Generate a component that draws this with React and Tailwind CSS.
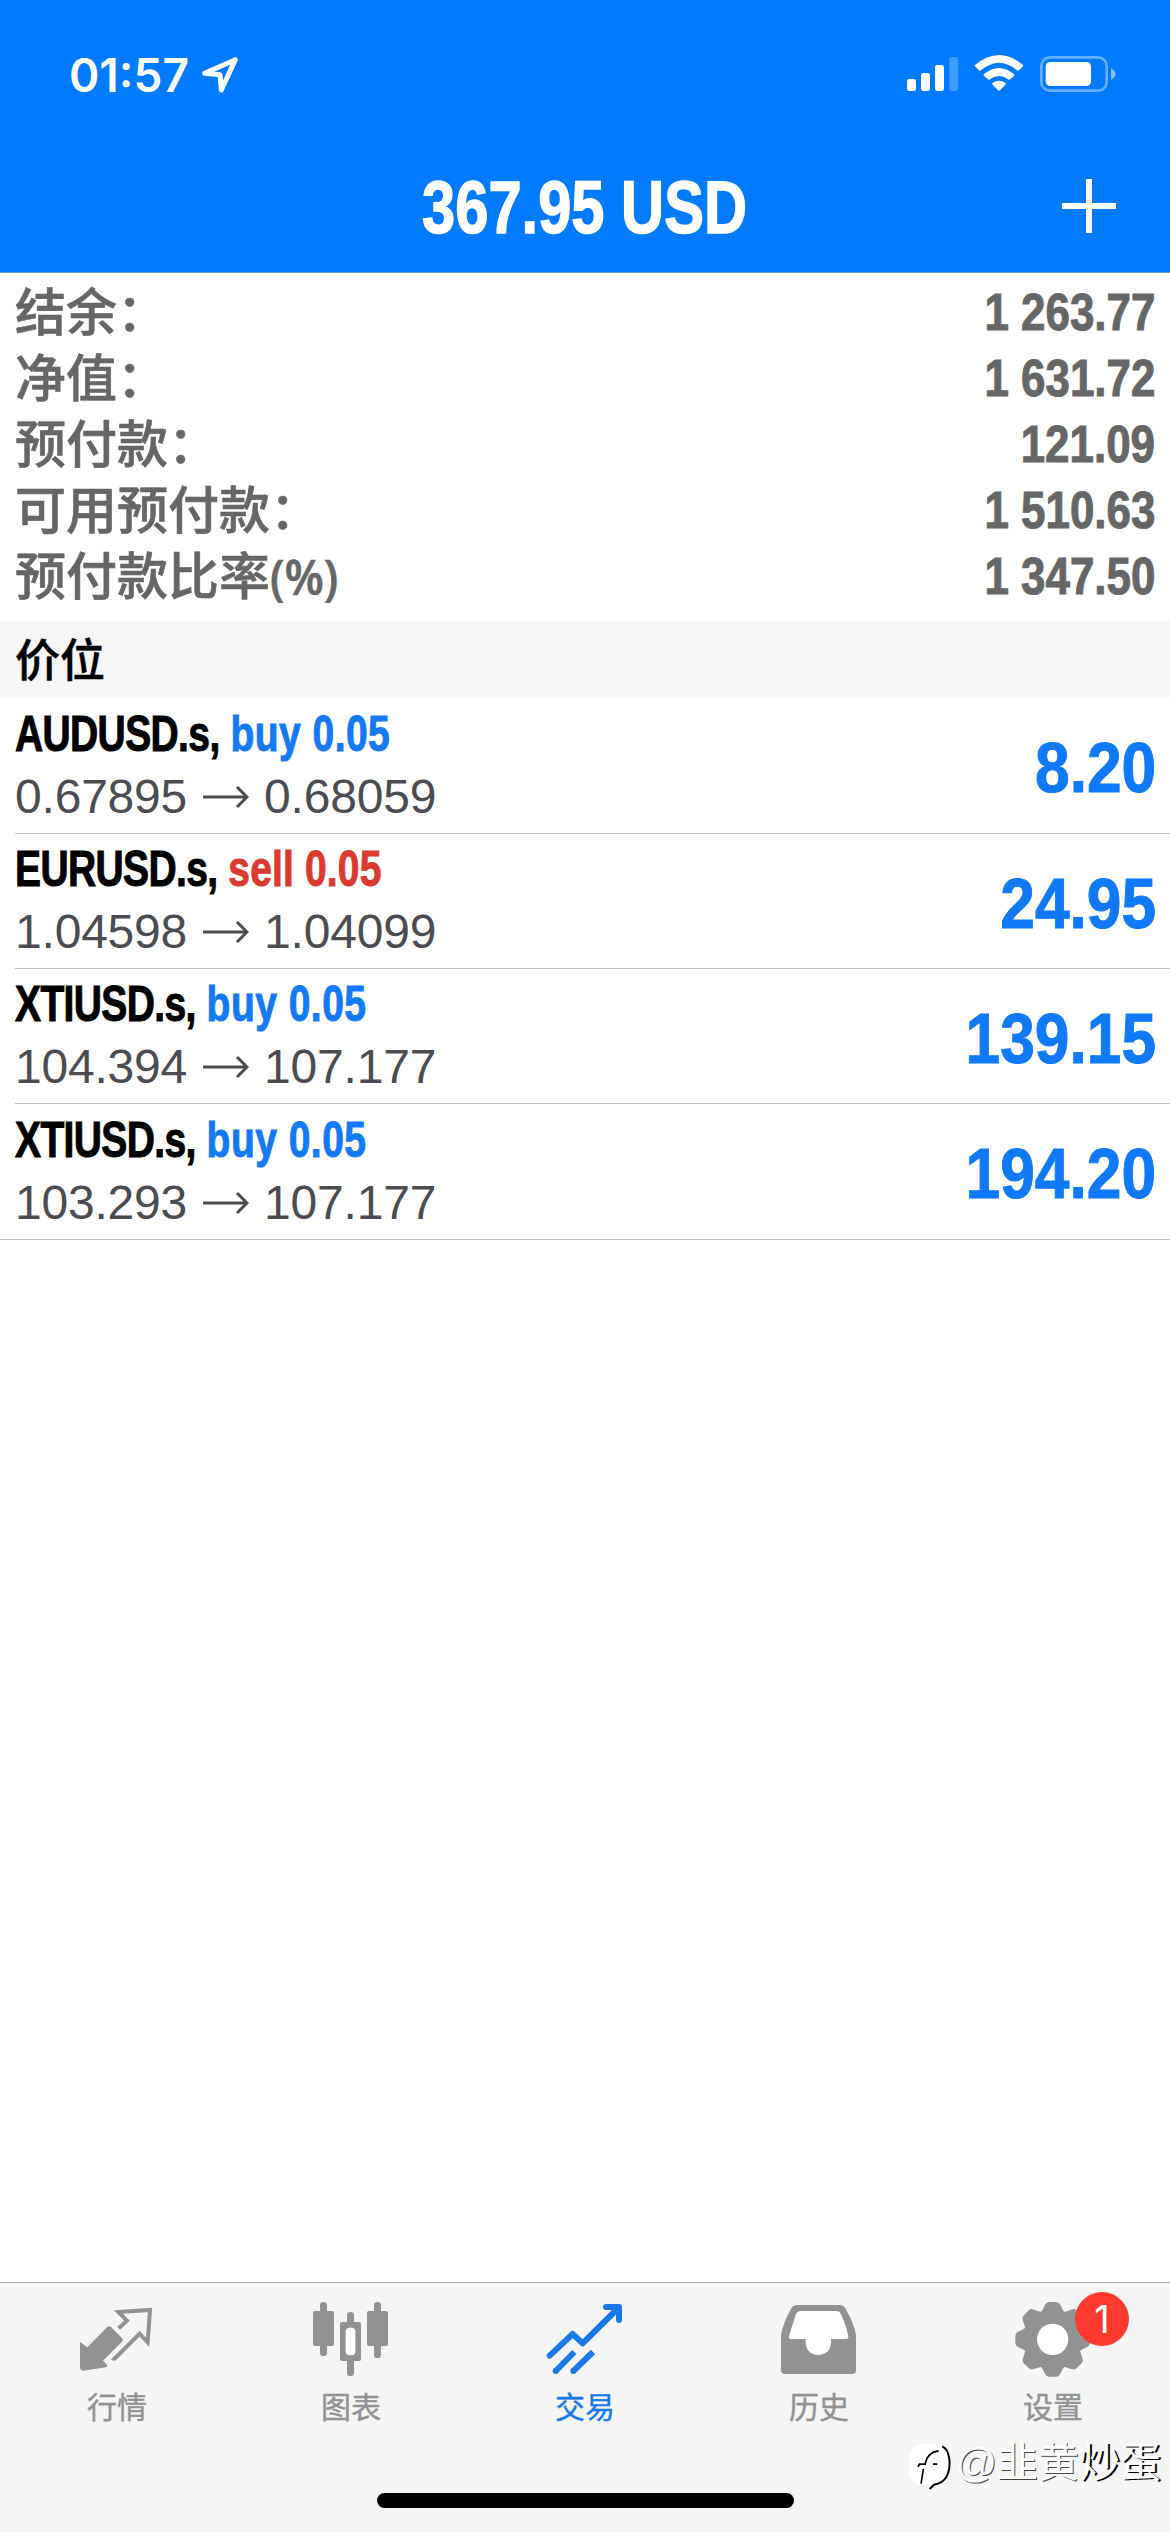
const summary = [
  { label: "结余：", value: "1 263.77" },
  { label: "净值：", value: "1 631.72" },
  { label: "预付款：", value: "121.09" },
  { label: "可用预付款：", value: "1 510.63" },
  { label: "预付款比率", unit: "(%)", value: "1 347.50" },
];

const positions = [
  { id: 1, symbol: "AUDUSD.s", side: "buy", volume: "0.05", open: "0.67895", current: "0.68059", profit: "8.20" },
  { id: 2, symbol: "EURUSD.s", side: "sell", volume: "0.05", open: "1.04598", current: "1.04099", profit: "24.95" },
  { id: 3, symbol: "XTIUSD.s", side: "buy", volume: "0.05", open: "104.394", current: "107.177", profit: "139.15" },
  { id: 4, symbol: "XTIUSD.s", side: "buy", volume: "0.05", open: "103.293", current: "107.177", profit: "194.20" },
];

function QuotesIcon() {
  return (
    <svg viewBox="216 81 270 270" className="w-[90px] h-[90px]" fill="none">
      <path
        d="M240 215 L262 232 L322 171 Q328 166 333 171 L366 204 Q371 210 366 215 L309 272 L322 285 Q323 291 318 292 L250 302 Q240 302 240 292 Z"
        fill="currentColor"
      />
      <path d="M356 175 L381 152 L355 126 L450 120 L443 217 L419 191 L346 264 Q342 268 337 264" stroke="currentColor" strokeWidth="12" />
    </svg>
  );
}

function ChartIcon() {
  return (
    <svg viewBox="918 81 270 270" className="w-[90px] h-[90px]" fill="currentColor">
      <rect x="939" y="123" width="63" height="105" rx="6" />
      <rect x="960" y="96" width="21" height="162" rx="10" />
      <rect x="1101" y="123" width="63" height="105" rx="6" />
      <rect x="1122" y="96" width="21" height="168" rx="10" />
      <rect x="1041" y="126" width="21" height="40" rx="10" />
      <rect x="1041" y="262" width="21" height="56" rx="10" />
      <rect x="1020" y="156" width="63" height="117" rx="6" />
      <rect x="1037" y="173" width="29" height="83" rx="12" fill="#fff" />
    </svg>
  );
}

function TradeIcon() {
  return (
    <svg viewBox="120 81 270 270" className="w-[90px] h-[90px]" fill="none" stroke="currentColor" strokeWidth="18">
      <path d="M149 257 L218 192 L248 220 L355 114" strokeLinecap="round" strokeLinejoin="round" />
      <path d="M318 111 H357 V150" strokeLinecap="round" strokeLinejoin="round" />
      <path d="M330 111 L357 138 V111 Z" fill="currentColor" stroke="none" />
      <circle cx="167" cy="303" r="9" fill="currentColor" stroke="none" />
      <circle cx="220" cy="303" r="9" fill="currentColor" stroke="none" />
      <path d="M167 303 L223 246" />
      <path d="M220 303 L279 246" />
    </svg>
  );
}

function HistoryIcon() {
  return (
    <svg viewBox="822 81 270 270" className="w-[90px] h-[90px]">
      <path
        d="M893 105 H1018 Q1030 105 1036 115 Q1062 160 1068 195 V300 Q1068 312 1056 312 H855 Q843 312 843 300 V195 Q849 160 874 115 Q880 105 893 105 Z"
        fill="currentColor"
      />
      <path
        d="M902 123 H1008 Q1018 123 1023 133 Q1038 165 1045 197 Q1046 207 1037 207 H993 V216 C993 240 977 255 955 255 C933 255 917 240 917 216 V207 H875 Q865 207 867 197 L887 135 Q891 123 902 123 Z"
        fill="#fff"
      />
    </svg>
  );
}

function SettingsIcon() {
  return (
    <svg viewBox="384 81 270 270" className="w-[90px] h-[90px]">
      <g fill="currentColor">
        <circle cx="518" cy="208" r="86" />
        {[0, 45, 90, 135, 180, 225, 270, 315].map((angle) => (
          <path
            key={angle}
            d="M478 132 C487 124 491 113 495 104 Q499 96 507 96 H529 Q537 96 541 104 C545 113 549 124 558 132 Z"
            transform={`rotate(${angle} 518 208)`}
          />
        ))}
      </g>
      <circle cx="518" cy="208" r="47" fill="#fff" />
    </svg>
  );
}

const tabs = [
  { label: "行情", icon: QuotesIcon },
  { label: "图表", icon: ChartIcon },
  { label: "交易", icon: TradeIcon, active: true },
  { label: "历史", icon: HistoryIcon },
  { label: "设置", icon: SettingsIcon, badge: 1 },
];

function StatusBar() {
  return (
    <div className="h-[150px] flex items-center justify-between pl-[69px] pr-[50px]">
      <div className="flex items-center gap-[11px]">
        <span className="font-[Inter,sans-serif] font-semibold text-[46px] leading-none">01:57</span>
        <svg viewBox="603 165 120 120" className="w-10 h-10" fill="none" stroke="#fff" strokeWidth="15" strokeLinejoin="round">
          <path d="M617 220 L709 179 L667 270 L663 224 Z" />
        </svg>
      </div>

      {/* Signal, wifi, battery */}
      <svg viewBox="120 90 660 135" className="w-[220px] h-[45px] -mt-[5px]" fill="#fff">
        <rect x="141" y="177" width="27" height="36" rx="7" />
        <rect x="183" y="159" width="27" height="54" rx="7" />
        <rect x="225" y="135" width="27" height="78" rx="7" />
        <rect x="268" y="111" width="27" height="102" rx="7" opacity="0.25" />
        <path d="M345 135 Q417 75 489 135 Q490 138 488 140 L477 151 Q474 153 471 151 Q417 106 363 151 Q360 153 357 151 L346 140 Q344 138 345 135 Z" />
        <path d="M372 162 Q417 126 462 162 Q465 165 462 168 L450 178 Q447 181 444 178 Q417 158 390 178 Q387 181 384 178 L372 168 Q369 165 372 162 Z" />
        <path d="M398 188 Q417 176 436 188 Q439 191 436 194 L421 210 Q417 214 413 210 L398 194 Q395 191 398 188 Z" />
        <rect x="544" y="112" width="196" height="100" rx="26" fill="none" stroke="#fff" strokeWidth="8" opacity="0.4" />
        <rect x="557" y="126" width="136" height="72" rx="14" />
        <path d="M753 145 Q767 152 767 162 Q767 172 753 179 Z" opacity="0.5" />
      </svg>
    </div>
  );
}

function Header() {
  return (
    <header className="h-[273px] bg-[#007aff] text-white border-b border-[#6a9fd0]">
      <StatusBar />
      <div className="h-[112px] grid grid-cols-[1fr_auto_1fr] items-center">
        <span />
        <h1 className="pt-1 font-bold text-[74px] leading-none origin-center scale-x-[0.806] [-webkit-text-stroke:1.5px_currentColor]">367.95 USD</h1>
        <svg viewBox="0 0 54 54" className="w-[54px] h-[54px] justify-self-end mr-[54px]" stroke="#fff" strokeWidth="6">
          <path d="M27 0 V54 M0 27 H54" />
        </svg>
      </div>
    </header>
  );
}

function Position({ item }) {
  return (
    <li className="h-[135px] first:h-[136px] last:h-[136px] ml-[15px] last:ml-0 last:pl-[15px] pr-[14px] flex items-center justify-between border-b border-[#c0c0c2]">
      <div>
        <div className="-mt-px mb-px font-bold text-[50px] leading-[62px] whitespace-nowrap origin-left scale-x-[0.78] [-webkit-text-stroke:1px_currentColor]">
          <span className="tracking-[-0.8px]">{item.symbol},</span>{" "}
          <span className={item.side === "buy" ? "text-[#1479f3] tracking-[0.6px]" : "text-[#d93b30] tracking-[0.2px]"}>
            {item.side} {item.volume}
          </span>
        </div>
        <div className="flex items-center text-[48px] leading-[62px] tracking-[-0.2px] text-[#4c4c50]">
          {item.open}
          <svg viewBox="0 0 46 22" className="w-[46px] h-[22px] ml-4 mr-[15px]" fill="none" stroke="currentColor" strokeWidth="3">
            <path d="M0 11 H44 M34 1 L44 11 L34 21" />
          </svg>
          {item.current}
        </div>
      </div>
      <span className="pt-[5px] font-bold text-[70px] leading-none text-[#1079f8] origin-right scale-x-[0.89] [-webkit-text-stroke:1px_currentColor]">{item.profit}</span>
    </li>
  );
}

function Watermark() {
  return (
    <div className="absolute right-[9px] bottom-[42px] flex items-center gap-[2px] text-white">
      <svg viewBox="80 525 135 145" className="w-[45px] h-[48px]" fill="none">
        <rect x="82" y="530" width="124" height="125" rx="42" fill="#fff" />
        <path d="M110 600 L114 592 H134 M119 651 L126 606 M132 590 Q138 556 172 552 M155 592 H168" stroke="#000" strokeWidth="5" />
        <path d="M183 538 C208 550 211 600 196 630 Q184 650 158 654 L145 667" stroke="#000" strokeWidth="6" />
      </svg>
      <span className="pb-[6px] text-[41px] leading-none [text-shadow:1px_1px_0_#444]">
        @韭黄<span className="[text-shadow:2px_1px_0_#000]">炒蛋</span>
      </span>
    </div>
  );
}

export default function App() {
  return (
    <div className="relative w-[1170px] h-[2532px] overflow-hidden bg-white flex flex-col font-['Liberation_Sans','Noto_Sans_CJK_SC',sans-serif]">
      <Header />

      {/* Account summary */}
      <dl className="h-[348px] pt-[6px] pl-[15px] pr-[15px] text-[#666]">
        {summary.map((row) => (
          <div key={row.label} className="h-[66px] flex items-center justify-between">
            <dt className="pt-[2px] font-medium text-[51px] leading-none whitespace-nowrap [-webkit-text-stroke:0.6px_currentColor]">
              {row.label}
              {row.unit && (
                <span className="inline-block font-['Open_Sans',sans-serif] font-semibold text-[49px] leading-none origin-left scale-x-[0.93]">{row.unit}</span>
              )}
            </dt>
            <dd className="font-bold text-[52px] leading-none origin-right scale-x-[0.845] [-webkit-text-stroke:1px_currentColor]">{row.value}</dd>
          </div>
        ))}
      </dl>

      <h2 className="h-[77px] flex items-center pl-[15px] pt-1 bg-[#f6f6f6] text-black font-medium text-[45px] leading-none [-webkit-text-stroke:0.5px_currentColor]">
        价位
      </h2>

      <ul>
        {positions.map((item) => (
          <Position key={item.id} item={item} />
        ))}
      </ul>

      <footer className="mt-auto h-[250px] bg-[#f5f5f5] border-t border-[#a9a9a9] flex flex-col items-center justify-between pb-6">
        <nav className="w-full grid grid-cols-5 pt-[14px]">
          {tabs.map(({ label, icon: Icon, badge, active }) => (
            <div key={label} className={`flex flex-col items-center gap-[6px] ${active ? "text-[#1a78e8]" : "text-[#929292]"}`}>
              <div className="relative">
                <Icon />
                {badge && (
                  <span className="absolute left-[67px] top-[-5px] w-[54px] h-[54px] rounded-full bg-[#ff3b30] text-white font-[Inter,sans-serif] text-[38px] flex items-center justify-center">
                    {badge}
                  </span>
                )}
              </div>
              <span className="text-[30px] leading-[30px] [-webkit-text-stroke:0.4px_currentColor]">{label}</span>
            </div>
          ))}
        </nav>
        <div className="w-[417px] h-[15px] rounded-full bg-black" />
      </footer>

      <Watermark />
    </div>
  );
}
